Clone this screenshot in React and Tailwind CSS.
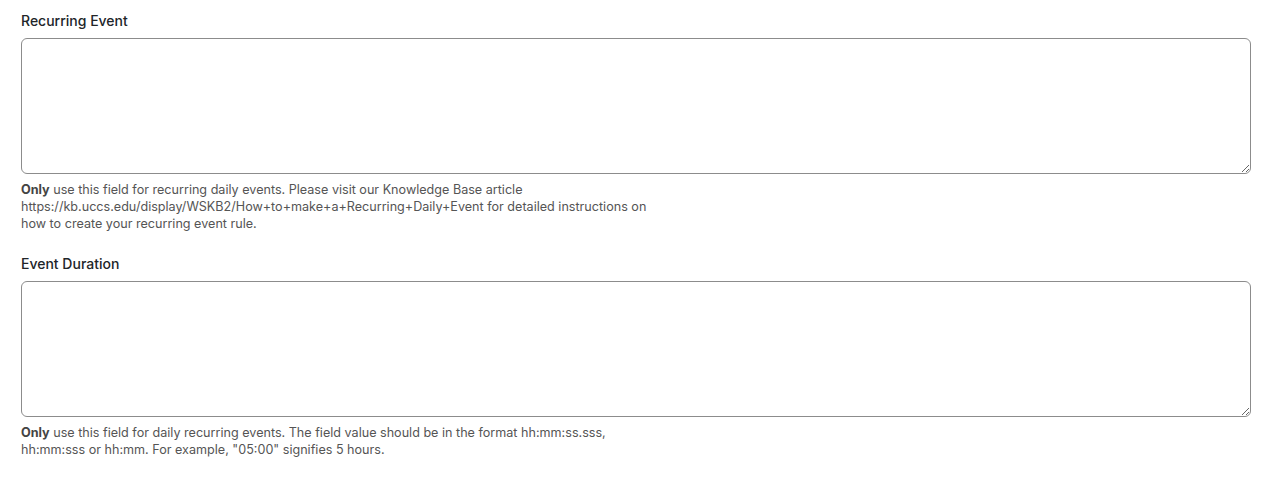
import React from "react";

function Field({ label, children }) {
  return (
    <div className="flex flex-col">
      <label className="text-[14px] leading-[20px] font-medium text-[#212529]">
        {label}
      </label>
      <textarea className="mt-[7px] h-[136px] w-full rounded-[6px] border border-[#8c8c8c] bg-white" />
      <p className="mt-[7px] max-w-[650px] text-[12.6px] leading-[17px] text-[#555]">
        <span className="font-bold text-[#444]">Only</span> {children}
      </p>
    </div>
  );
}

export default function App() {
  return (
    <div
      className="flex flex-col gap-[22px] bg-white pl-[21px] pr-[12px] pt-[11px] pb-[20px]"
      style={{ fontFamily: "Inter, 'Noto Sans', sans-serif" }}
    >
      <Field label="Recurring Event">
        use this field for recurring daily events. Please visit our Knowledge
        Base article
        https://kb.uccs.edu/display/WSKB2/How+to+make+a+Recurring+Daily+Event
        for detailed instructions on how to create your recurring event rule.
      </Field>
      <Field label="Event Duration">
        use this field for daily recurring events. The field value should be in
        the format hh:mm:ss.sss, hh:mm:sss or hh:mm. For example, "05:00"
        signifies 5 hours.
      </Field>
    </div>
  );
}
